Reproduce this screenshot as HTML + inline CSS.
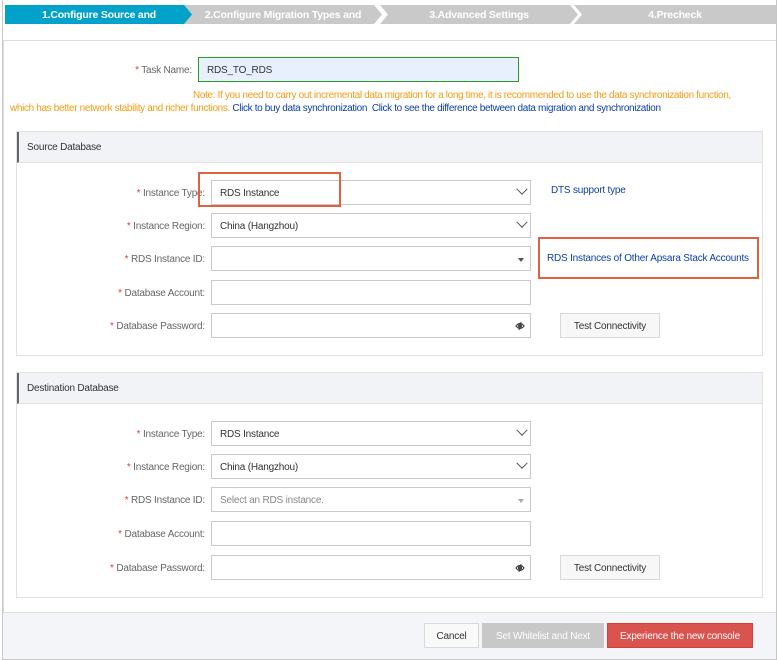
<!DOCTYPE html><html><head><style>
*{box-sizing:border-box;margin:0;padding:0}
body{width:778px;height:660px;background:#fff;font-family:"Liberation Sans",sans-serif;font-size:10px;letter-spacing:-0.2px;color:#333;position:relative;overflow:hidden}
.a{position:absolute;white-space:nowrap}
.outer{left:2px;top:0;width:775px;height:660px;border:1px solid #c9c9c9;border-top:none}
.step{top:5px;height:19px;color:#fff;font-size:10.5px;font-weight:bold;line-height:20px;text-align:center}
.lbl{width:200px;left:5px;text-align:right;color:#666;line-height:27px}
.lbl b{color:#e4393c;font-weight:normal}
.in{left:211px;width:320px;height:25px;border:1px solid #c9c9c9;background:#fff;line-height:26px;padding-left:8px;color:#333}
.chev{position:absolute;right:4px;top:7px;width:8px;height:8px;border-right:1.6px solid #555;border-bottom:1.6px solid #555;transform:rotate(45deg) translate(-2px,-2px)}
.tri{position:absolute;right:6px;top:11px;border:3.5px solid transparent;border-top:4px solid #555}
.eye{position:absolute;right:5px;top:7px}
.panel{left:16px;width:747px;border:1px solid #e1e1e1}
.ph{height:31px;background:#f2f3f7;border-left:2px solid #666;border-bottom:1px solid #e1e1e1;line-height:31px;padding-left:8px;color:#333}
.btn{height:25px;border:1px solid #d9d9d9;background:#f7f7f7;line-height:26px;text-align:center;color:#333}
.blue{color:#0c3ea8}
.red{border:2px solid #e0603f}
</style></head><body>
<div class="a outer"></div>
<div class="a step" style="left:5px;width:188px;background:#00a2ca;clip-path:polygon(0 0,180px 0,188px 50%,180px 100%,0 100%)">1.Configure Source and</div>
<div class="a step" style="left:184px;width:198px;background:#c9c9c9;clip-path:polygon(0 0,190px 0,198px 50%,190px 100%,0 100%,8px 50%)">2.Configure Migration Types and</div>
<div class="a step" style="left:380px;width:198px;background:#c9c9c9;clip-path:polygon(0 0,190px 0,198px 50%,190px 100%,0 100%,8px 50%)">3.Advanced Settings</div>
<div class="a step" style="left:574px;width:202px;background:#c9c9c9;clip-path:polygon(0 0,202px 0,202px 100%,0 100%,8px 50%)">4.Precheck</div>
<div class="a" style="left:3px;top:40px;width:773px;border-top:1px solid #ddd"></div>
<div class="a" style="left:3px;top:40px;width:1px;height:572px;background:#ddd"></div>
<div class="a lbl" style="top:57px;width:187px;left:5px"><b>*</b> Task Name:</div>
<div class="a in" style="left:198px;top:57px;width:321px;height:25px;border:1px solid #2b9a2b;background:#e8f0fe">RDS_TO_RDS</div>
<div class="a" style="left:193px;top:90px;color:#f39c12;letter-spacing:-0.35px">Note: If you need to carry out incremental data migration for a long time, it is recommended to use the data synchronization function,</div>
<div class="a" style="left:10px;top:103px;color:#f39c12;letter-spacing:-0.35px">which has better network stability and richer functions. <span class="blue">Click to buy data synchronization &nbsp;Click to see the difference between data migration and synchronization</span></div>

<div class="a panel" style="top:131px;height:225px"><div class="ph">Source Database</div></div>
<div class="a lbl" style="top:180px"><b>*</b> Instance Type:</div><div class="a in" style="top:180px">RDS Instance<i class="chev"></i></div>
<div class="a blue" style="left:551px;top:185px">DTS support type</div>
<div class="a lbl" style="top:213px"><b>*</b> Instance Region:</div><div class="a in" style="top:213px">China (Hangzhou)<i class="chev"></i></div>
<div class="a lbl" style="top:246px"><b>*</b> RDS Instance ID:</div><div class="a in" style="top:246px"><i class="tri"></i></div>
<div class="a blue" style="left:547px;top:253px">RDS Instances of Other Apsara Stack Accounts</div>
<div class="a lbl" style="top:280px"><b>*</b> Database Account:</div><div class="a in" style="top:280px"></div>
<div class="a lbl" style="top:313px"><b>*</b> Database Password:</div><div class="a in" style="top:313px"><svg class="eye" width="10" height="10" viewBox="0 0 10 10"><path d="M1 5Q5 0 9 5Q5 10 1 5Z" fill="none" stroke="#444" stroke-width="1.2"/><circle cx="5" cy="5" r="2" fill="#444"/><path d="M6 1L4 9" stroke="#444"/></svg></div>
<div class="a btn" style="left:560px;top:313px;width:100px">Test Connectivity</div>
<div class="a red" style="left:198px;top:172px;width:143px;height:35px"></div>
<div class="a red" style="left:538px;top:237px;width:221px;height:42px"></div>

<div class="a panel" style="top:372px;height:226px"><div class="ph">Destination Database</div></div>
<div class="a lbl" style="top:421px"><b>*</b> Instance Type:</div><div class="a in" style="top:421px">RDS Instance<i class="chev"></i></div>
<div class="a lbl" style="top:454px"><b>*</b> Instance Region:</div><div class="a in" style="top:454px">China (Hangzhou)<i class="chev"></i></div>
<div class="a lbl" style="top:487px"><b>*</b> RDS Instance ID:</div><div class="a in" style="top:487px;color:#888">Select an RDS instance.<i class="tri" style="border-top-color:#aaa"></i></div>
<div class="a lbl" style="top:521px"><b>*</b> Database Account:</div><div class="a in" style="top:521px"></div>
<div class="a lbl" style="top:555px"><b>*</b> Database Password:</div><div class="a in" style="top:555px"><svg class="eye" width="10" height="10" viewBox="0 0 10 10"><path d="M1 5Q5 0 9 5Q5 10 1 5Z" fill="none" stroke="#444" stroke-width="1.2"/><circle cx="5" cy="5" r="2" fill="#444"/><path d="M6 1L4 9" stroke="#444"/></svg></div>
<div class="a btn" style="left:560px;top:555px;width:100px">Test Connectivity</div>

<div class="a" style="left:3px;top:612px;width:773px;height:47px;background:#f4f5f9;border-top:1px solid #ddd"></div>
<div class="a btn" style="left:424px;top:623px;width:55px;background:#f9f9f9">Cancel</div>
<div class="a btn" style="left:482px;top:623px;width:122px;background:#c8c8c8;border-color:#c8c8c8;color:#fff">Set Whitelist and Next</div>
<div class="a btn" style="left:607px;top:623px;width:146px;background:#d9534f;border-color:#d43f3a;color:#fff">Experience the new console</div>
</body></html>
